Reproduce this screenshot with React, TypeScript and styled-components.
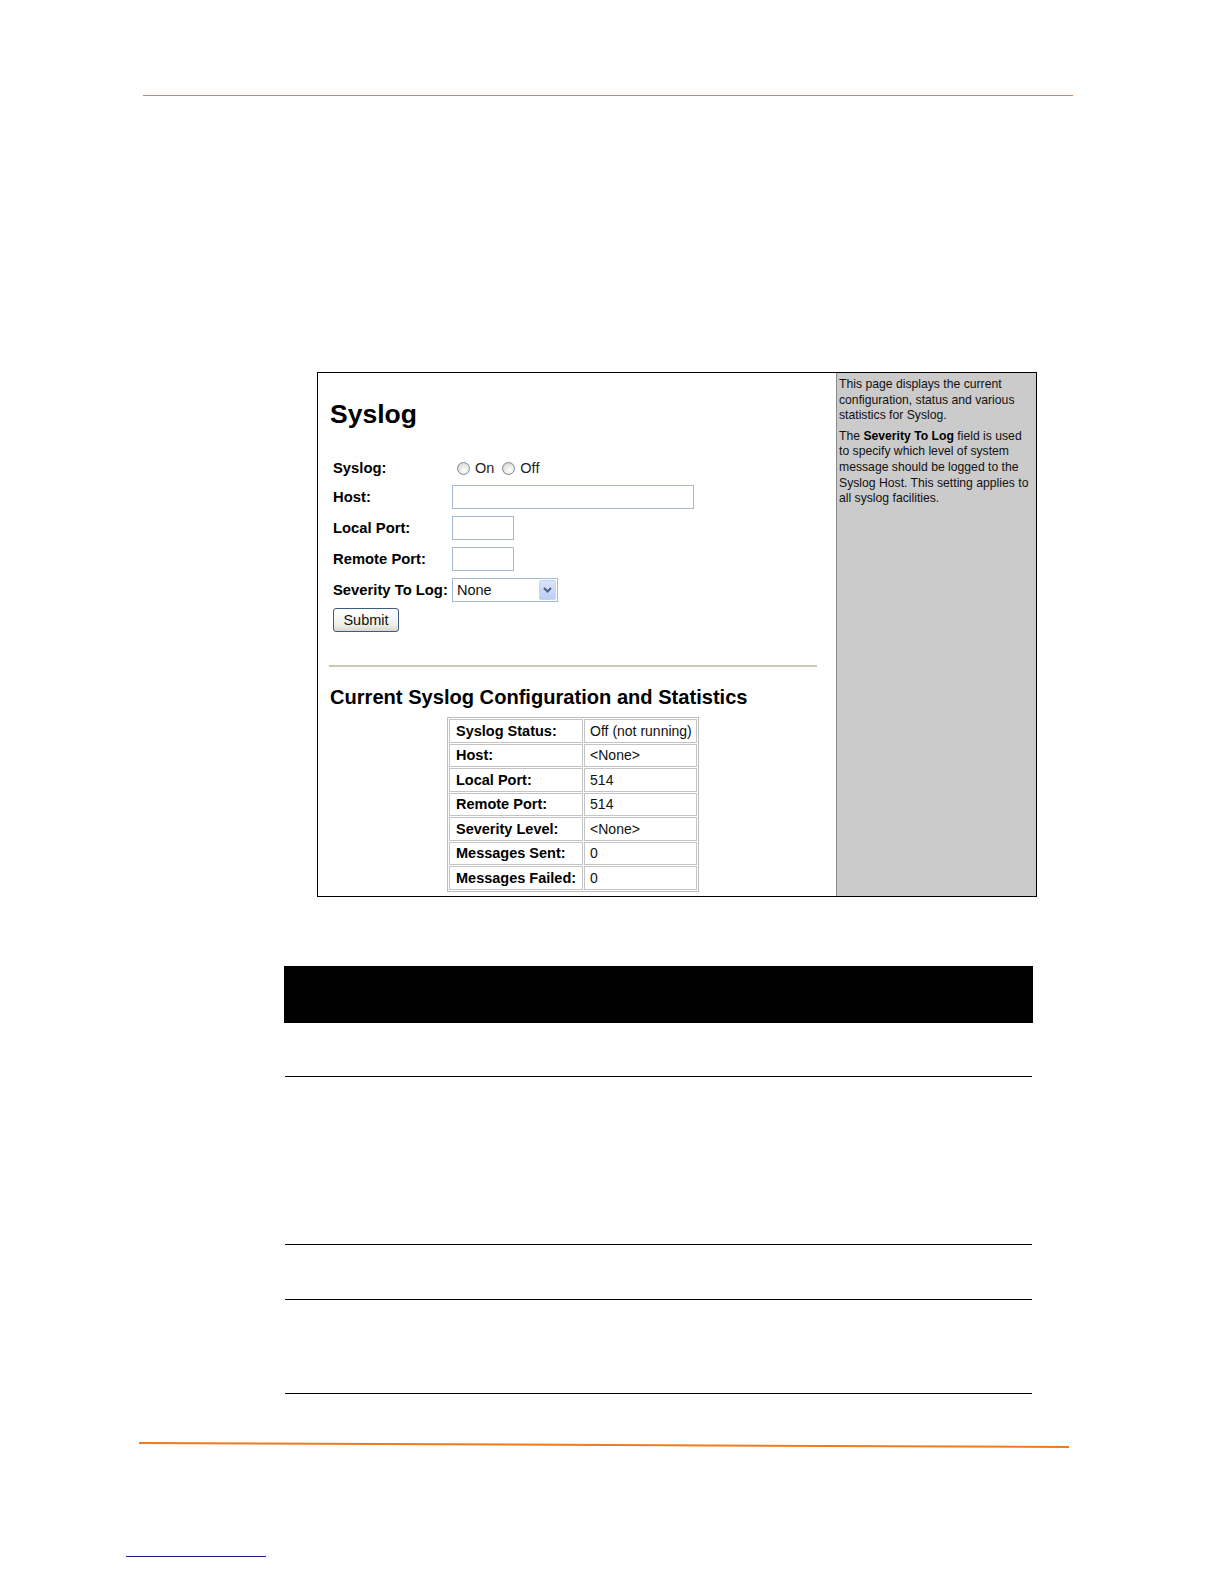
import styled, { createGlobalStyle } from 'styled-components';

const GlobalStyle = createGlobalStyle`
  html, body, #root {
    margin: 0;
    padding: 0;
    background: #ffffff;
  }
  body {
    font-family: "Liberation Sans", Arial, sans-serif;
    color: #000;
    overflow: hidden;
  }
`;

const stats: [string, string][] = [
  ['Syslog Status:', 'Off (not running)'],
  ['Host:', '<None>'],
  ['Local Port:', '514'],
  ['Remote Port:', '514'],
  ['Severity Level:', '<None>'],
  ['Messages Sent:', '0'],
  ['Messages Failed:', '0'],
];

const docRows = [53, 167, 54, 93];

const App = () => {
  return (
    <>
      <GlobalStyle />
      <Page>
        <TopRule />

        <Screenshot>
          <Main>
            <Title>Syslog</Title>
            <Form>
              <Label>Syslog:</Label>
              <RadioGroup>
                <RadioLabel>
                  <Radio type="radio" name="syslog" />
                  On
                </RadioLabel>
                <RadioLabel>
                  <Radio type="radio" name="syslog" />
                  Off
                </RadioLabel>
              </RadioGroup>

              <Label>Host:</Label>
              <TextInput $width={242} />

              <Label>Local Port:</Label>
              <TextInput $width={62} />

              <Label>Remote Port:</Label>
              <TextInput $width={62} />

              <Label>Severity To Log:</Label>
              <SelectBox>
                <SelectValue>None</SelectValue>
                <SelectArrow>
                  <svg width="9" height="6" viewBox="0 0 9 6">
                    <path d="M1 1 L4.5 4.5 L8 1" fill="none" stroke="#4d6185" strokeWidth="2" />
                  </svg>
                </SelectArrow>
              </SelectBox>

              <SubmitButton type="button">Submit</SubmitButton>
            </Form>

            <Divider />

            <SubTitle>Current Syslog Configuration and Statistics</SubTitle>
            <StatsTable>
              <tbody>
                {stats.map(([label, value]) => (
                  <tr key={label}>
                    <StatLabel>{label}</StatLabel>
                    <StatValue>{value}</StatValue>
                  </tr>
                ))}
              </tbody>
            </StatsTable>
          </Main>

          <HelpPanel>
            <HelpText>
              This page displays the current configuration, status and various statistics for Syslog.
            </HelpText>
            <HelpText>
              The <Strong>Severity To Log</Strong> field is used to specify which level of system
              message should be logged to the Syslog Host. This setting applies to all syslog
              facilities.
            </HelpText>
          </HelpPanel>
        </Screenshot>

        <DocTable>
          <HeaderBar />
          {docRows.map((h, i) => (
            <DocRow key={i} $height={h} />
          ))}
        </DocTable>

        <BottomRule />
        <FooterLink />
      </Page>
    </>
  );
};

export default App;

const Page = styled.div`
  width: 1224px;
  height: 1584px;
  padding-top: 95px;
  box-sizing: border-box;
  overflow: hidden;
`;

const TopRule = styled.div`
  margin-left: 143px;
  width: 930px;
  height: 1px;
  background: #d8893c;
`;

const Screenshot = styled.div`
  margin: 276px 0 0 317px;
  width: 720px;
  height: 525px;
  box-sizing: border-box;
  border: 1px solid #000;
  display: grid;
  grid-template-columns: 1fr 200px;
  overflow: hidden;
`;

const Main = styled.div`
  padding: 26px 0 0 12px;
  box-sizing: border-box;
  font-family: "Liberation Sans", Arial, sans-serif;
`;

const Title = styled.h1`
  margin: 0;
  font-size: 26.5px;
  line-height: 30px;
  font-weight: bold;
`;

const Form = styled.div`
  margin: 29px 0 0 3px;
  display: grid;
  grid-template-columns: 119px auto;
  grid-auto-rows: 24px;
  grid-template-rows: 20px;
  row-gap: 7px;
  align-items: center;
  justify-items: start;
`;

const Label = styled.div`
  font-size: 14.8px;
  font-weight: bold;
  white-space: nowrap;
`;

const RadioGroup = styled.div`
  display: flex;
  align-items: center;
  gap: 8px;
  margin-left: 5px;
`;

const RadioLabel = styled.label`
  display: flex;
  align-items: center;
  gap: 5px;
  font-size: 14.5px;
  color: #222;
`;

const Radio = styled.input`
  appearance: none;
  margin: 0;
  width: 13px;
  height: 13px;
  border-radius: 50%;
  border: 1px solid #7a8ca0;
  background: radial-gradient(circle at 60% 65%, #ffffff 0%, #e4e4e0 55%, #c8c8c4 100%);
  box-sizing: border-box;
`;

const TextInput = styled.input<{ $width: number }>`
  width: ${({ $width }) => $width}px;
  height: 24px;
  box-sizing: border-box;
  border: 1px solid #a5b9d0;
  background: #fff;
  margin: 0;
  padding: 0 3px;
`;

const SelectBox = styled.div`
  width: 106px;
  height: 24px;
  box-sizing: border-box;
  border: 1px solid #a5b9d0;
  display: flex;
  align-items: center;
  justify-content: space-between;
  padding: 1px;
  background: #fff;
`;

const SelectValue = styled.span`
  font-size: 14.5px;
  padding-left: 3px;
  color: #111;
`;

const SelectArrow = styled.span`
  width: 17px;
  height: 20px;
  box-sizing: border-box;
  border: 1px solid #c7d3f0;
  border-radius: 2px;
  background: linear-gradient(#d9e3fb, #bccdf5);
  display: flex;
  align-items: center;
  justify-content: center;
`;

const SubmitButton = styled.button`
  grid-column: 1 / span 2;
  margin-top: -2px;
  width: 66px;
  height: 24px;
  box-sizing: border-box;
  border: 1px solid #3c5c80;
  border-radius: 3px;
  background: linear-gradient(#ffffff, #f0f0ea 70%, #d8d8d0);
  font-family: "Liberation Sans", Arial, sans-serif;
  font-size: 14.5px;
  color: #111;
  padding: 0;
`;

const Divider = styled.div`
  margin: 32px 19px 0 -1px;
  height: 2px;
  background: #cdc8b4;
`;

const SubTitle = styled.h2`
  margin: 18px 0 0;
  font-size: 20.1px;
  line-height: 24px;
  font-weight: bold;
  white-space: nowrap;
`;

const StatsTable = styled.table`
  margin: 8px 0 0 117px;
  width: 251px;
  border: 1px solid #bdbdbd;
  border-spacing: 1px;
  font-size: 14.5px;
`;

const StatLabel = styled.td`
  width: 124px;
  height: 19.5px;
  border: 1px solid #c4c4c4;
  padding: 1px 6px;
  font-weight: bold;
  white-space: nowrap;
`;

const StatValue = styled.td`
  height: 19.5px;
  border: 1px solid #c4c4c4;
  padding: 1px 4px 1px 5px;
  font-size: 14px;
  white-space: nowrap;
  color: #111;
`;

const HelpPanel = styled.div`
  background: #cbcbcb;
  border-left: 1px solid #8a8a8a;
  padding: 4px 6px 0 2px;
  font-family: "Liberation Sans", Arial, sans-serif;
  font-size: 12.2px;
  line-height: 15.6px;
  color: #111;
`;

const HelpText = styled.p`
  margin: 0 0 5px;
`;

const Strong = styled.strong`
  font-weight: bold;
  color: #000;
`;

const DocTable = styled.div`
  margin: 69px 0 0 284px;
  width: 749px;
`;

const HeaderBar = styled.div`
  height: 57px;
  background: #000;
`;

const DocRow = styled.div<{ $height: number }>`
  height: ${({ $height }) => $height}px;
  margin: 0 1px;
  border-bottom: 1px solid #000;
`;

const BottomRule = styled.div`
  margin: 48px 0 0 139px;
  width: 930px;
  height: 2px;
  background: #ee7a22;
  transform: rotate(0.25deg);
  transform-origin: left center;
`;

const FooterLink = styled.div`
  margin: 112px 0 0 126px;
  width: 140px;
  height: 1px;
  background: #1c1c8a;
`;
